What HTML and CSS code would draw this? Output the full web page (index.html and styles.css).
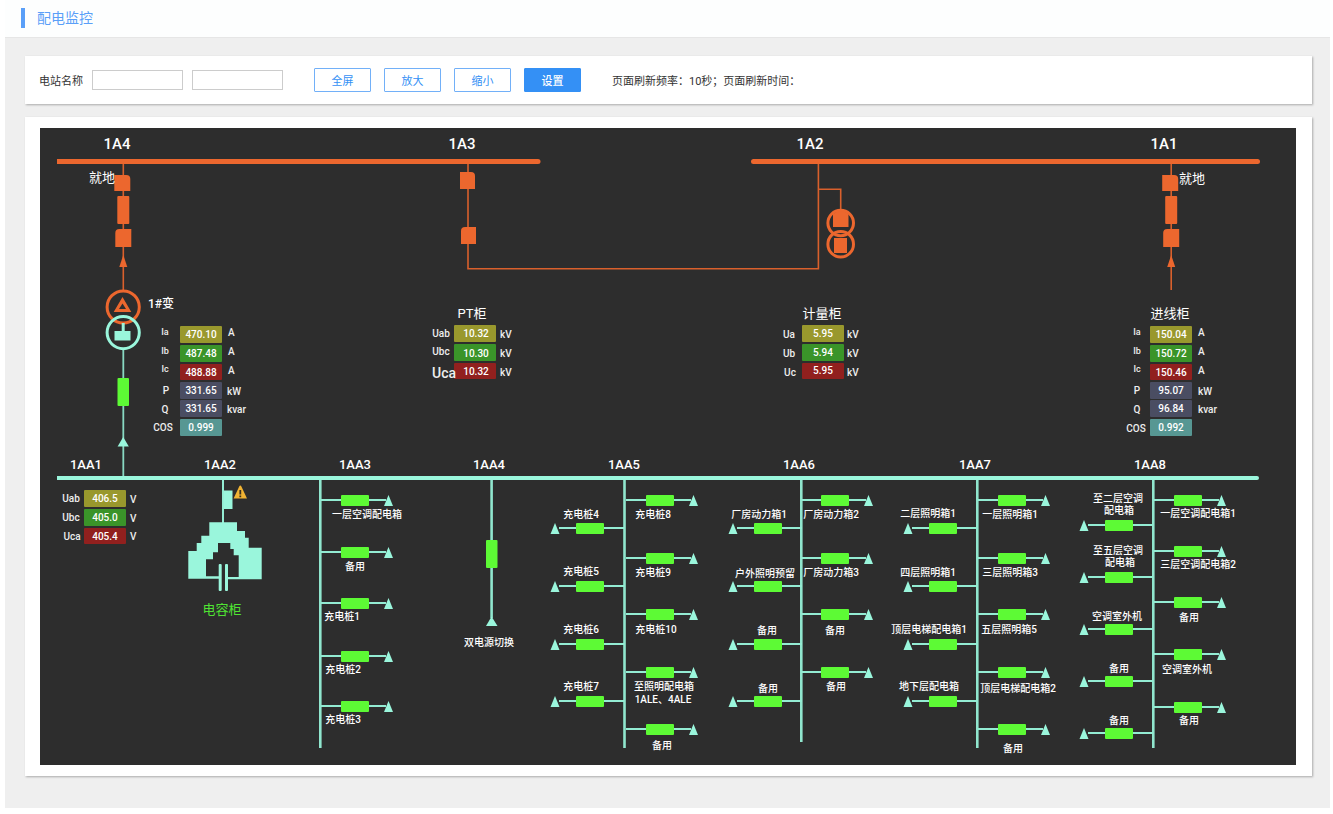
FILE: index.html
```html
<!DOCTYPE html>
<html lang="zh-CN">
<head>
<meta charset="utf-8">
<title>配电监控</title>
<link rel="stylesheet" href="styles.css">
</head>
<body>
<div class="page">
  <header class="page-header"><h1 class="page-title">配电监控</h1></header>
  <main class="content">
    <form class="card toolbar">
      <div class="station">
        <label class="station-label" for="station">电站名称</label>
        <input class="field" id="station" type="text">
        <input class="field" id="room" type="text" aria-label="配电室">
      </div>
      <div class="actions">
        <button class="btn" type="button">全屏</button>
        <button class="btn" type="button">放大</button>
        <button class="btn" type="button">缩小</button>
        <button class="btn btn-primary" type="button">设置</button>
      </div>
      <p class="refresh">页面刷新频率：10秒；页面刷新时间：</p>
    </form>

    <section class="card board">
      <svg class="diagram" viewBox="40 128 1256 637" role="img" aria-label="一次接线图">
        <defs>
          <g id="feed-right">
            <path class="wire" d="M-34 0H31"/>
            <rect class="closed" x="-14" y="-5" width="28" height="11" rx="1"/>
            <path class="node" d="M33.500 -5L38 6H29Z"/>
          </g>
          <g id="feed-left">
            <path class="wire" d="M-31 0H34"/>
            <rect class="closed" x="-14" y="-5" width="28" height="11" rx="1"/>
            <path class="node" d="M-35 -5L-30.500 6H-39.500Z"/>
          </g>
          <path id="switch-top" d="M-9 0H3Q7 0 7 4V16H-9Z"/>
          <path id="switch-low" d="M-8 4Q-8 0 -4 0H8V18H-8Z"/>
          <g id="drawer" class="hot">
            <use href="#switch-top" y="175"/>
            <rect x="-6" y="196" width="12" height="28" rx="1"/>
            <use href="#switch-low" y="229"/>
            <path d="M0 255L4 267H-4Z"/>
          </g>
        </defs>

        <!-- 10kV side -->
        <g class="hot">
          <path d="M57 159H538Q540.500 159 540.500 161.500T538 164H57Z"/>
          <rect x="751" y="159" width="509" height="5" rx="2.500"/>
        </g>
        <g class="hot-wire">
          <path d="M123.300 164V290M1171.200 164V290"/>
          <path d="M468 164V268.700H818.400V164M818.400 189.200H840.700V209"/>
        </g>
        <use href="#drawer" x="123.300"/>
        <use href="#drawer" x="1171.200"/>
        <g class="hot">
          <path d="M460 172H471Q475 172 475 176V189H460Z"/>
          <path d="M461 231Q461 227 465 227H476V244H461Z"/>
          <path d="M833 214Q841 207 848.500 214V227H833Z"/>
          <rect x="834" y="238" width="13" height="15"/>
          <path fill-rule="evenodd" d="M122.500 297L131.300 312H113.700ZM122.500 303.500L119 309H126Z"/>
        </g>
        <g class="hot-ring">
          <circle cx="840.700" cy="223" r="12.800"/>
          <circle cx="840.700" cy="244.200" r="12.800"/>
          <circle cx="123.200" cy="307" r="16.100"/>
        </g>

        <!-- 400V side -->
        <circle class="cool-ring" cx="123.200" cy="332.600" r="16.100"/>
        <path class="node" d="M121.700 323H124.700V331H130.500V340.500H114.500V331H121.700Z"/>
        <path class="thin-wire" d="M123.300 350V476"/>
        <rect class="closed" x="117.500" y="378" width="11.500" height="28" rx="1"/>
        <path class="node" d="M123.200 437L128.800 446.500H117.600Z"/>
        <path class="node" d="M57 476H1257Q1259 476 1259 478T1257 480H57Z"/>

        <path class="wire" d="M223 480V523"/>
        <rect class="node" x="223.500" y="490.500" width="9" height="18.500"/>
        <path class="node" d="M209.300 522.300H237V531H245V537.700H248.700V547.700H261.700V579.300H227.700V577H238.700V555.300H233.700V549H230.300V543H218V552.300H213V559.300H206V576.300H219V578.700H188.300V551H196.700V543H201.300V535.700H209.300Z"/>
        <rect class="node" x="218.700" y="564" width="3" height="27" rx="1"/>
        <rect class="node" x="225" y="564" width="3" height="27" rx="1"/>
        <path class="warn" d="M240.300 485.500Q241 485.500 241.400 486.500L247 498.500H233.600L239.200 486.500Q239.600 485.500 240.300 485.500Z"/>
        <path class="warn-mark" d="M239.400 490H241.200V494.500H239.400ZM239.400 495.500H241.200V497.200H239.400Z"/>

        <g class="spine">
          <path d="M320.300 480V748M624.500 480V748M801.300 480V742M977.300 480V748M1153.300 480V748"/>
          <path d="M491.600 480V618"/>
        </g>
        <rect class="closed" x="486" y="540" width="11.500" height="28" rx="1"/>
        <path class="node" d="M491.600 616.500L497.500 626H486Z"/>

        <use href="#feed-right" x="355" y="500"/>
        <use href="#feed-right" x="355" y="552"/>
        <use href="#feed-right" x="355" y="603"/>
        <use href="#feed-right" x="355" y="656"/>
        <use href="#feed-right" x="355" y="706"/>

        <use href="#feed-left" x="590" y="528"/>
        <use href="#feed-left" x="590" y="586"/>
        <use href="#feed-left" x="590" y="644"/>
        <use href="#feed-left" x="590" y="701"/>
        <use href="#feed-right" x="660" y="500"/>
        <use href="#feed-right" x="660" y="558"/>
        <use href="#feed-right" x="660" y="614"/>
        <use href="#feed-right" x="660" y="672"/>
        <use href="#feed-right" x="660" y="729"/>

        <use href="#feed-left" x="768" y="528"/>
        <use href="#feed-left" x="768" y="586"/>
        <use href="#feed-left" x="768" y="644"/>
        <use href="#feed-left" x="768" y="701"/>
        <use href="#feed-right" x="835" y="500"/>
        <use href="#feed-right" x="835" y="558"/>
        <use href="#feed-right" x="835" y="614"/>
        <use href="#feed-right" x="835" y="672"/>

        <use href="#feed-left" x="943" y="528"/>
        <use href="#feed-left" x="943" y="586"/>
        <use href="#feed-left" x="943" y="644"/>
        <use href="#feed-left" x="943" y="701"/>
        <use href="#feed-right" x="1012" y="500"/>
        <use href="#feed-right" x="1012" y="558"/>
        <use href="#feed-right" x="1012" y="614"/>
        <use href="#feed-right" x="1012" y="672"/>
        <use href="#feed-right" x="1012" y="729"/>

        <use href="#feed-left" x="1119" y="525"/>
        <use href="#feed-left" x="1119" y="577"/>
        <use href="#feed-left" x="1119" y="629"/>
        <use href="#feed-left" x="1119" y="681"/>
        <use href="#feed-left" x="1119" y="733"/>
        <use href="#feed-right" x="1188" y="500"/>
        <use href="#feed-right" x="1188" y="551"/>
        <use href="#feed-right" x="1188" y="602"/>
        <use href="#feed-right" x="1188" y="654"/>
        <use href="#feed-right" x="1188" y="707"/>

        <!-- cabinet numbers -->
        <g class="bay">
          <text x="117" y="149">1A4</text>
          <text x="462" y="149">1A3</text>
          <text x="810" y="149">1A2</text>
          <text x="1164" y="149">1A1</text>
        </g>
        <g class="bay-low">
          <text x="86" y="469">1AA1</text>
          <text x="220" y="469">1AA2</text>
          <text x="355" y="469">1AA3</text>
          <text x="489" y="469">1AA4</text>
          <text x="624" y="469">1AA5</text>
          <text x="799" y="469">1AA6</text>
          <text x="975" y="469">1AA7</text>
          <text x="1150" y="469">1AA8</text>
        </g>
        <g class="cabinet">
          <text x="102" y="182">就地</text>
          <text x="1192" y="183">就地</text>
          <text x="472" y="318">PT柜</text>
          <text x="822" y="318">计量柜</text>
          <text x="1170" y="318">进线柜</text>
          <text class="capacitor" x="222" y="614">电容柜</text>
        </g>
        <text class="transformer" x="161" y="308">1#变</text>

        <!-- readings -->
        <g class="phase-a">
          <rect x="180" y="326" width="42" height="17" rx="1"/>
          <rect x="454" y="325" width="42" height="17" rx="1"/>
          <rect x="802" y="325" width="42" height="17" rx="1"/>
          <rect x="1150" y="326" width="42" height="17" rx="1"/>
          <rect x="84" y="490" width="42" height="17" rx="1"/>
        </g>
        <g class="phase-b">
          <rect x="180" y="345" width="42" height="17" rx="1"/>
          <rect x="454" y="344" width="42" height="17" rx="1"/>
          <rect x="802" y="344" width="42" height="17" rx="1"/>
          <rect x="1150" y="345" width="42" height="17" rx="1"/>
          <rect x="84" y="509" width="42" height="17" rx="1"/>
        </g>
        <g class="phase-c">
          <rect x="180" y="364" width="42" height="16" rx="1"/>
          <rect x="454" y="363" width="42" height="16" rx="1"/>
          <rect x="802" y="363" width="42" height="16" rx="1"/>
          <rect x="1150" y="364" width="42" height="16" rx="1"/>
          <rect x="84" y="528" width="42" height="16" rx="1"/>
        </g>
        <g class="power">
          <rect x="180" y="382" width="42" height="17" rx="1"/>
          <rect x="180" y="400" width="42" height="17" rx="1"/>
          <rect x="1150" y="382" width="42" height="17" rx="1"/>
          <rect x="1150" y="400" width="42" height="17" rx="1"/>
        </g>
        <g class="factor">
          <rect x="180" y="419" width="42" height="17" rx="1"/>
          <rect x="1150" y="419" width="42" height="17" rx="1"/>
        </g>
        <g class="value">
          <text x="201" y="338">470.10</text>
          <text x="201" y="357">487.48</text>
          <text x="201" y="376">488.88</text>
          <text x="201" y="394">331.65</text>
          <text x="201" y="412">331.65</text>
          <text x="201" y="431">0.999</text>
          <text x="476" y="337">10.32</text>
          <text x="476" y="357">10.30</text>
          <text x="476" y="375">10.32</text>
          <text x="823" y="337">5.95</text>
          <text x="823" y="356">5.94</text>
          <text x="823" y="374">5.95</text>
          <text x="1171" y="338">150.04</text>
          <text x="1171" y="357">150.72</text>
          <text x="1171" y="376">150.46</text>
          <text x="1171" y="394">95.07</text>
          <text x="1171" y="412">96.84</text>
          <text x="1171" y="431">0.992</text>
          <text x="105" y="502">406.5</text>
          <text x="105" y="521">405.0</text>
          <text x="105" y="540">405.4</text>
        </g>
        <g class="quantity small">
          <text x="165" y="335">Ia</text>
          <text x="165" y="354">Ib</text>
          <text x="165" y="372">Ic</text>
          <text x="1137" y="335">Ia</text>
          <text x="1137" y="354">Ib</text>
          <text x="1137" y="372">Ic</text>
        </g>
        <g class="quantity">
          <text x="166" y="394">P</text>
          <text x="165" y="413">Q</text>
          <text x="163" y="431">COS</text>
          <text x="1137" y="394">P</text>
          <text x="1137" y="413">Q</text>
          <text x="1136" y="432">COS</text>
          <text x="441" y="337">Uab</text>
          <text x="441" y="355">Ubc</text>
          <text x="789" y="338">Ua</text>
          <text x="789" y="357">Ub</text>
          <text x="790" y="376">Uc</text>
          <text x="71" y="502">Uab</text>
          <text x="71" y="521">Ubc</text>
          <text x="72" y="540">Uca</text>
        </g>
        <text class="quantity large" x="444" y="378">Uca</text>
        <g class="unit">
          <text x="228" y="336">A</text>
          <text x="228" y="355">A</text>
          <text x="228" y="374">A</text>
          <text x="227" y="395">kW</text>
          <text x="227" y="413">kvar</text>
          <text x="500" y="338">kV</text>
          <text x="500" y="357">kV</text>
          <text x="500" y="376">kV</text>
          <text x="847" y="338">kV</text>
          <text x="847" y="357">kV</text>
          <text x="847" y="376">kV</text>
          <text x="1198" y="336">A</text>
          <text x="1198" y="355">A</text>
          <text x="1198" y="374">A</text>
          <text x="1198" y="395">kW</text>
          <text x="1198" y="413">kvar</text>
          <text x="130" y="503">V</text>
          <text x="130" y="522">V</text>
          <text x="130" y="540">V</text>
        </g>

        <!-- feeder names -->
        <g class="feeder">
          <text x="367" y="518">一层空调配电箱</text>
          <text x="355" y="570">备用</text>
          <text x="342" y="620">充电桩1</text>
          <text x="343" y="673">充电桩2</text>
          <text x="343" y="723">充电桩3</text>
          <text x="489" y="646">双电源切换</text>

          <text x="581" y="518">充电桩4</text>
          <text x="581" y="575">充电桩5</text>
          <text x="581" y="633">充电桩6</text>
          <text x="581" y="690">充电桩7</text>
          <text x="653" y="518">充电桩8</text>
          <text x="653" y="576">充电桩9</text>
          <text x="656" y="633">充电桩10</text>
          <text x="664" y="690">至照明配电箱</text>
          <text x="663" y="703">1ALE、4ALE</text>
          <text x="662" y="749">备用</text>

          <text x="759" y="518">厂房动力箱1</text>
          <text x="765" y="577">户外照明预留</text>
          <text x="767" y="634">备用</text>
          <text x="768" y="692">备用</text>
          <text x="831" y="518">厂房动力箱2</text>
          <text x="831" y="576">厂房动力箱3</text>
          <text x="835" y="634">备用</text>
          <text x="836" y="690">备用</text>

          <text x="928" y="517">二层照明箱1</text>
          <text x="928" y="576">四层照明箱1</text>
          <text x="929" y="633">顶层电梯配电箱1</text>
          <text x="929" y="690">地下层配电箱</text>
          <text x="1010" y="518">一层照明箱1</text>
          <text x="1010" y="576">三层照明箱3</text>
          <text x="1009" y="633">五层照明箱5</text>
          <text x="1018" y="692">顶层电梯配电箱2</text>
          <text x="1013" y="752">备用</text>

          <text x="1118" y="502">至二层空调</text>
          <text x="1119" y="514">配电箱</text>
          <text x="1118" y="554">至五层空调</text>
          <text x="1120" y="566">配电箱</text>
          <text x="1117" y="620">空调室外机</text>
          <text x="1119" y="672">备用</text>
          <text x="1119" y="724">备用</text>
          <text x="1198" y="517">一层空调配电箱1</text>
          <text x="1198" y="568">三层空调配电箱2</text>
          <text x="1189" y="621">备用</text>
          <text x="1187" y="673">空调室外机</text>
          <text x="1189" y="724">备用</text>
        </g>
      </svg>
    </section>
  </main>
</div>
</body>
</html>
```
FILE: styles.css
```css
* { box-sizing: border-box; }

body {
  margin: 0;
  background: #fff;
  color: #333;
  font-family: Roboto, "Noto Sans CJK SC", sans-serif;
  font-size: 11px;
}

.page { margin: 0 3px 0 5px; }

.page-header {
  height: 38px;
  padding: 8px 16px;
  background: #fdfefe;
  border-bottom: 1px solid #e6e6e6;
}

.page-title {
  margin: 0;
  padding-left: 12px;
  border-left: 4px solid #5a9ff8;
  color: #5a9ff8;
  font-size: 14px;
  font-weight: 400;
  line-height: 20px;
}

.content {
  display: flex;
  flex-direction: column;
  gap: 13px;
  padding: 18px 18px 32px 20px;
  background: #efefef;
}

.card {
  background: #fff;
  box-shadow: 1px 1px 2px #aaa;
}

.toolbar {
  display: flex;
  flex-wrap: wrap;
  align-items: center;
  gap: 0 31px;
  min-height: 48px;
  padding: 0 14px;
}

.station, .actions { display: flex; align-items: center; }
.station { gap: 9px; }
.actions { gap: 13px; }
.station-label { color: #333; }

.field {
  width: 91px;
  height: 20px;
  padding: 0 4px;
  border: 1px solid #ccc;
  border-radius: 0;
  background: #fff;
  font: inherit;
}

.btn {
  width: 57px;
  height: 24px;
  padding: 0;
  border: 1px solid #72b0f8;
  border-radius: 1px;
  background: #fff;
  color: #3490f5;
  font: inherit;
}

.btn-primary {
  border-color: #3490f5;
  background: #3490f5;
  color: #fff;
  font-weight: 500;
}

.refresh { margin: 0; }

.board { padding: 11px 16px 11px 15px; }

.diagram {
  display: block;
  width: 100%;
  height: auto;
  background: #2d2d2d;
}

.hot { fill: #ec672e; }
.hot-wire { fill: none; stroke: #d9602c; stroke-width: 1.6; }
.hot-ring { fill: none; stroke: #ec672e; stroke-width: 3; }
.cool-ring { fill: #2d2d2d; fill-opacity: 0; stroke: #9af6dc; stroke-width: 3; }
.node { fill: #9af6dc; }
.wire { fill: none; stroke: #93ecd3; stroke-width: 2; }
.thin-wire { fill: none; stroke: #88d8c2; stroke-width: 1.8; }
.spine { fill: none; stroke: #90e6ce; stroke-width: 2.6; }
.closed { fill: #5dfa35; }
.warn { fill: #f0b333; }
.warn-mark { fill: #3a3020; }

.bay, .bay-low, .cabinet, .transformer, .value, .quantity, .feeder {
  fill: #fff;
  text-anchor: middle;
}
.bay { font-size: 15px; font-weight: 500; }
.bay-low { font-size: 13px; font-weight: 500; }
.cabinet { font-size: 13px; }
.capacitor { fill: #4fe433; }
.transformer { font-size: 12px; font-weight: 500; }
.value { font-size: 10px; font-weight: 500; }
.quantity { font-size: 10px; fill: #eee; font-weight: 500; }
.small { font-size: 9px; }
.large { font-size: 14px; }
.unit { font-size: 10px; fill: #eee; font-weight: 500; }
.feeder { font-size: 10px; font-weight: 500; }

.phase-a { fill: #99982d; }
.phase-b { fill: #3a9429; }
.phase-c { fill: #91201e; }
.power { fill: #4a4d62; }
.factor { fill: #579793; }
```
